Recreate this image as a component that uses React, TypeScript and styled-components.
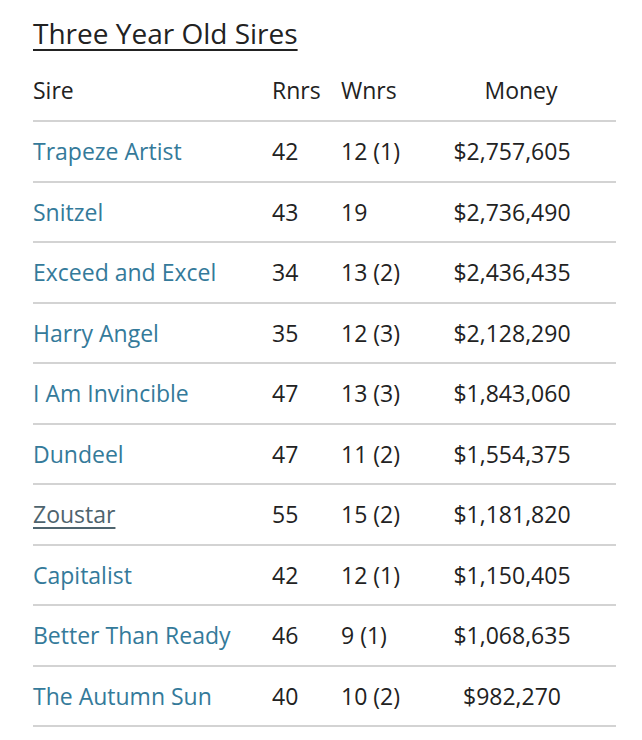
import React from "react";
import styled, { createGlobalStyle } from "styled-components";

const GlobalStyle = createGlobalStyle`
  body {
    margin: 0;
    background: #fff;
    font-family: "Open Sans", "Liberation Sans", sans-serif;
    color: #222;
  }
`;

const rows = [
  { sire: "Trapeze Artist", rnrs: "42", wnrs: "12 (1)", money: "$2,757,605" },
  { sire: "Snitzel", rnrs: "43", wnrs: "19", money: "$2,736,490" },
  { sire: "Exceed and Excel", rnrs: "34", wnrs: "13 (2)", money: "$2,436,435" },
  { sire: "Harry Angel", rnrs: "35", wnrs: "12 (3)", money: "$2,128,290" },
  { sire: "I Am Invincible", rnrs: "47", wnrs: "13 (3)", money: "$1,843,060" },
  { sire: "Dundeel", rnrs: "47", wnrs: "11 (2)", money: "$1,554,375" },
  { sire: "Zoustar", rnrs: "55", wnrs: "15 (2)", money: "$1,181,820", hover: true },
  { sire: "Capitalist", rnrs: "42", wnrs: "12 (1)", money: "$1,150,405" },
  { sire: "Better Than Ready", rnrs: "46", wnrs: "9 (1)", money: "$1,068,635" },
  { sire: "The Autumn Sun", rnrs: "40", wnrs: "10 (2)", money: "$982,270" },
];

export default function App() {
  return (
    <>
      <GlobalStyle />
      <Wrapper>
        <Title>Three Year Old Sires</Title>
        <Table>
          <colgroup>
            <col style={{ width: 239 }} />
            <col style={{ width: 69 }} />
            <col style={{ width: 67 }} />
            <col />
          </colgroup>
          <thead>
            <tr>
              <HeadCell>Sire</HeadCell>
              <HeadCell>Rnrs</HeadCell>
              <HeadCell>Wnrs</HeadCell>
              <HeadCell $money>Money</HeadCell>
            </tr>
          </thead>
          <tbody>
            {rows.map((r) => (
              <Row key={r.sire}>
                <Cell>
                  <SireLink href="#" $hover={r.hover}>
                    {r.sire}
                  </SireLink>
                </Cell>
                <Cell>{r.rnrs}</Cell>
                <Cell>{r.wnrs}</Cell>
                <Cell $money>{r.money}</Cell>
              </Row>
            ))}
          </tbody>
        </Table>
      </Wrapper>
    </>
  );
}

// styles
const Wrapper = styled.div`
  padding: 14px 26px 0 33px;
`;

const Title = styled.h2`
  margin: 0;
  font-size: 28px;
  font-weight: 400;
  line-height: 38px;
  text-decoration: underline;
  text-decoration-thickness: 2px;
  text-underline-offset: 5px;
  color: #222;
`;

const Table = styled.table`
  width: 583px;
  border-collapse: collapse;
  font-size: 23px;
  line-height: 32px;
  table-layout: fixed;
`;

const HeadCell = styled.th<{ $money?: boolean }>`
  font-weight: 400;
  text-align: ${(p) => (p.$money ? "center" : "left")};
  padding: 22px 0 14px ${(p) => (p.$money ? "18px" : "0")};
  border-bottom: 2px solid #d3d3d3;
`;

const Row = styled.tr`
  border-bottom: 2px solid #d3d3d3;
`;

const Cell = styled.td<{ $money?: boolean }>`
  height: 58.5px;
  padding: 0;
  text-align: ${(p) => (p.$money ? "center" : "left")};
  vertical-align: middle;
`;

const SireLink = styled.a<{ $hover?: boolean }>`
  color: ${(p) => (p.$hover ? "#4e646e" : "#347a9a")};
  text-decoration: ${(p) => (p.$hover ? "underline" : "none")};
  text-decoration-thickness: 1.5px;
  text-underline-offset: 4px;
`;
